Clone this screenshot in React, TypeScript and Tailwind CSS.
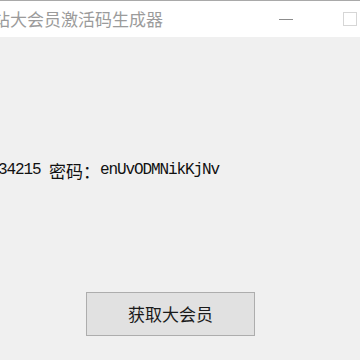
const mono = { fontFamily: '"Liberation Mono", "Noto Sans CJK SC", monospace' };

export default function App() {
  return (
    <div className="w-[360px] h-[360px] overflow-hidden bg-[#f0f0f0] flex flex-col border-t border-[#a9a9a9]">
      {/* title bar */}
      <div className="h-[36px] bg-white flex items-center shrink-0">
        <span className="-ml-[7px] -mt-[1px] text-[17px] leading-none text-[#9b9b9b] font-['Noto_Sans_CJK_SC',sans-serif] whitespace-nowrap">
          站大会员激活码生成器
        </span>
        <div className="ml-auto flex items-center mr-[3px]">
          <div className="w-[14px] h-px bg-[#8c8c8c]" />
          <div className="ml-[50px] w-[14px] h-[14px] border border-[#d6d6d6]" />
        </div>
      </div>

      {/* result line */}
      <div className="mt-[123px] h-[20px] flex items-center -ml-[2px] whitespace-pre text-[#111]">
        <span className="text-[16px] tracking-[-1.1px]" style={mono}>34215 </span>
        <span className="text-[17px] leading-none font-['Noto_Sans_CJK_SC',serif]">密码：</span>
        <span className="text-[16px] tracking-[-1.1px]" style={mono}>enUvODMNikKjNv</span>
      </div>

      {/* button */}
      <button className="mt-[112px] ml-[86px] w-[169px] h-[44px] border border-[#adadad] bg-[#e1e1e1] flex items-center justify-center text-[17px] text-[#1a1a1a] font-['Noto_Sans_CJK_SC',sans-serif]">
        获取大会员
      </button>
    </div>
  );
}
